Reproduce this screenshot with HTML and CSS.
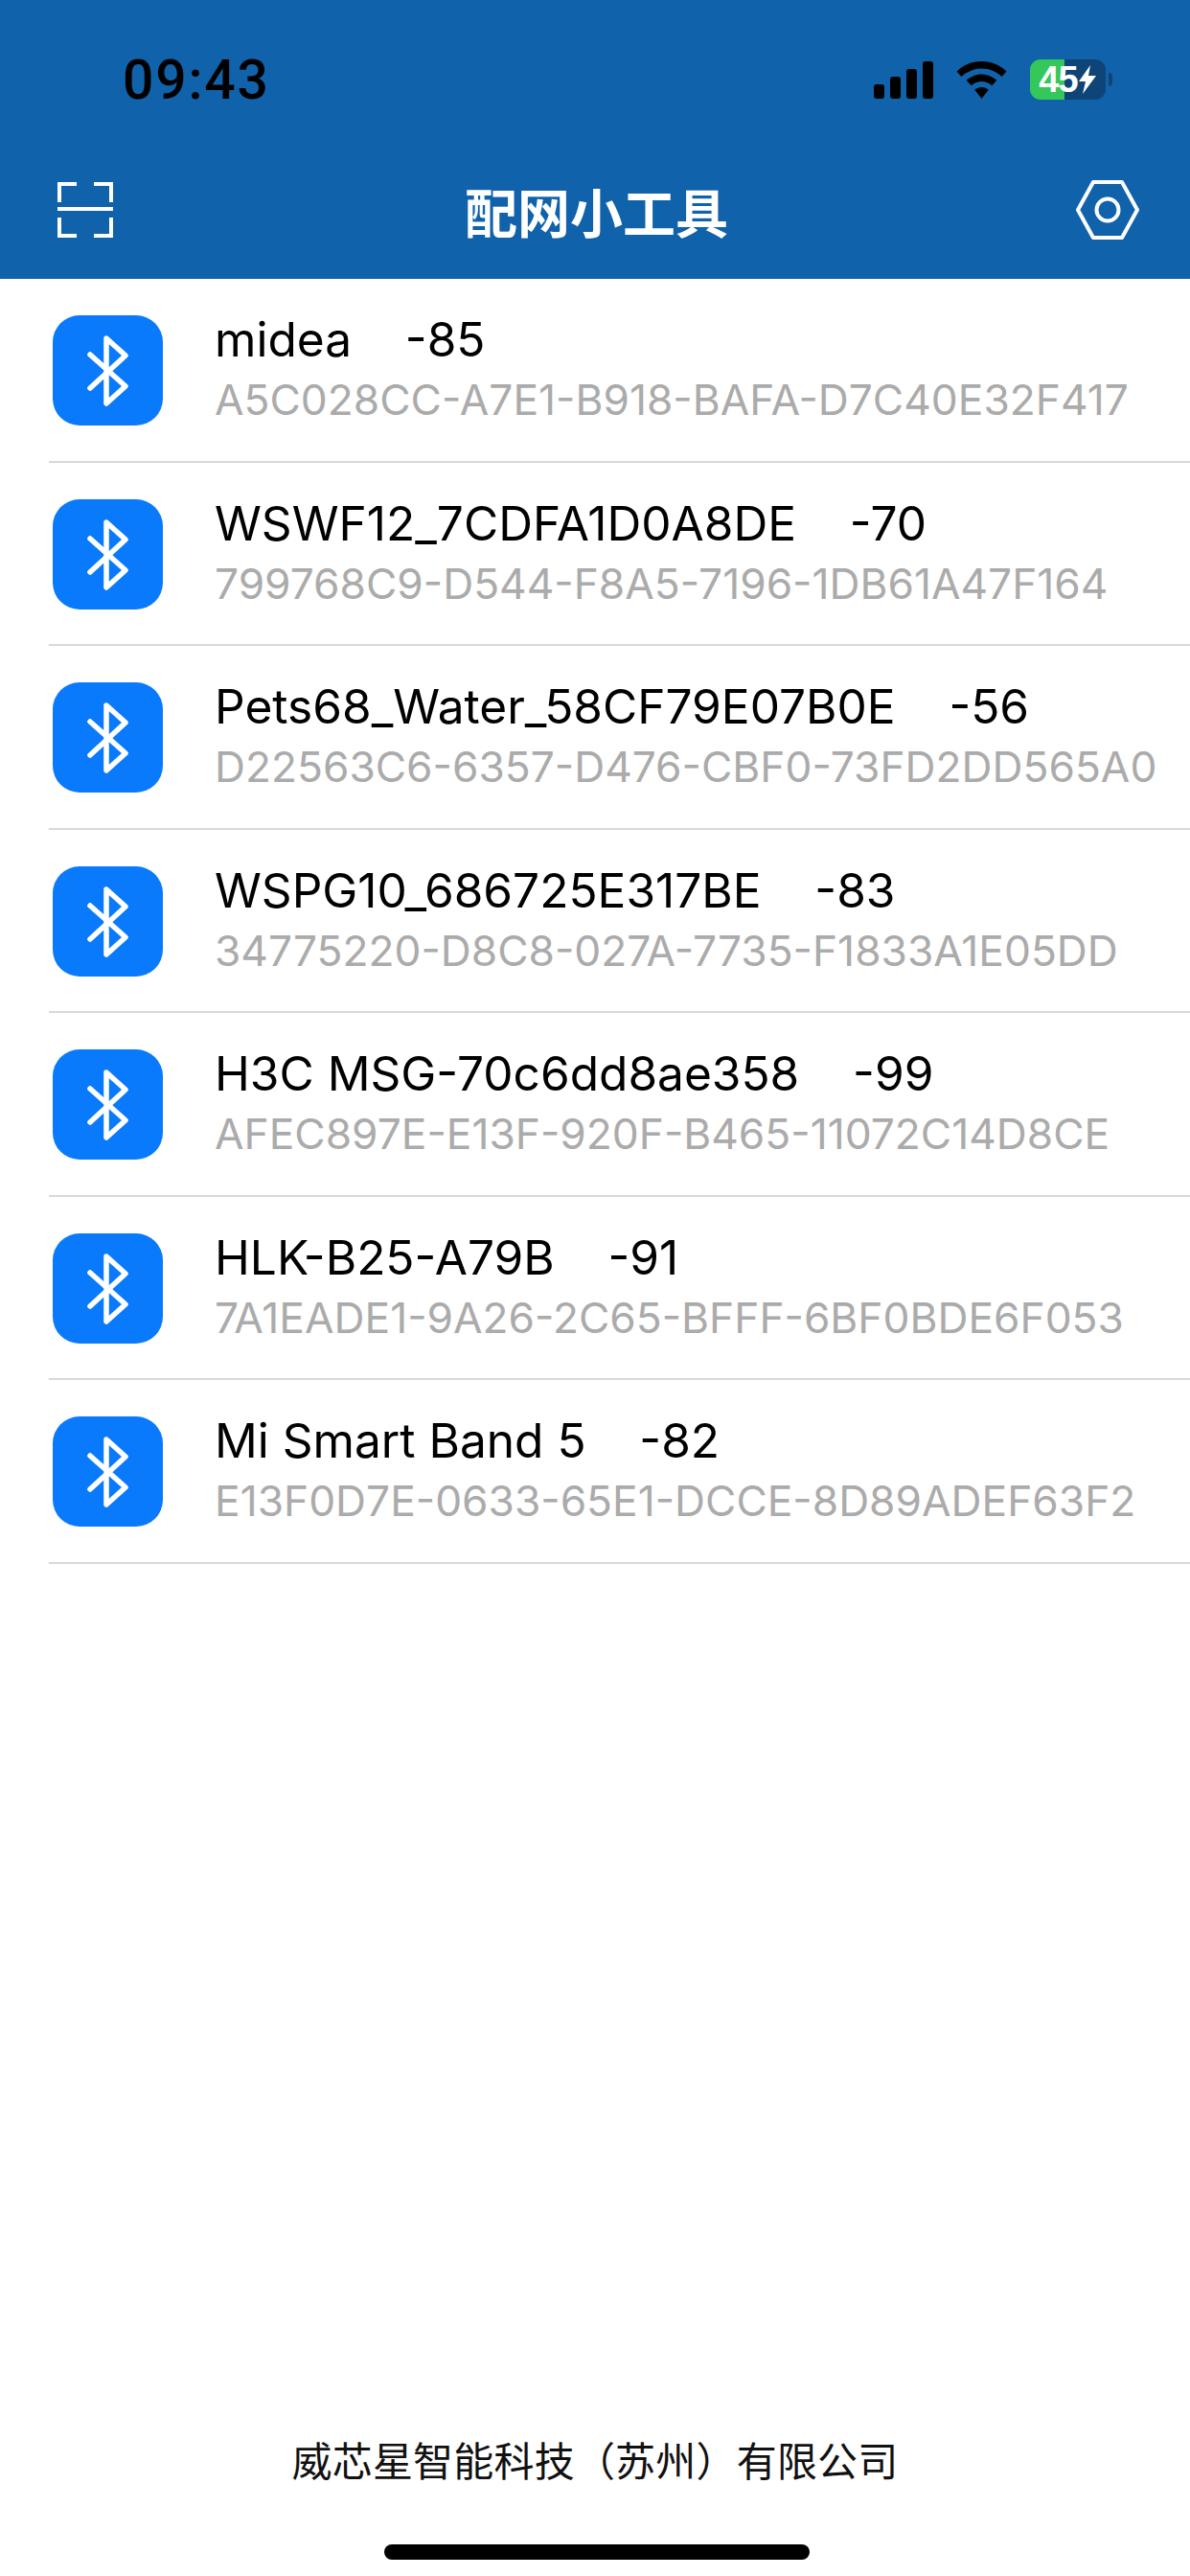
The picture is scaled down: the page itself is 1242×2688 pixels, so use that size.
FILE: index.html
```html
<!DOCTYPE html>
<html lang="zh-CN">
<head>
    <meta charset="UTF-8">
    <meta name="viewport" content="width=device-width, initial-scale=1.0">
    <title>配网小工具</title>
    <link rel="stylesheet" href="styles.css">
</head>
<body>
    <svg class="defs" width="0" height="0">
        <symbol id="bt" viewBox="0 0 115 115">
            <rect width="115" height="115" rx="28" fill="#0a7afc"/>
            <path d="M39 41L76 74L56 92V24L76 42L39 76" fill="none" stroke="#fff" stroke-width="5.5" stroke-linecap="round" stroke-linejoin="round"/>
        </symbol>
    </svg>

    <header class="header">
        <div class="status-bar">
            <span class="time">09:43</span>
            <div class="status-icons">
                <svg class="signal" width="62" height="39" viewBox="0 0 62 39">
                    <rect x="0" y="24" width="11" height="15" rx="3"/>
                    <rect x="17" y="16" width="11" height="23" rx="3"/>
                    <rect x="34" y="8" width="11" height="31" rx="3"/>
                    <rect x="51" y="0" width="11" height="39" rx="3"/>
                </svg>
                <svg class="wifi" width="53" height="39" viewBox="0 0 53 39">
                    <path d="M26.5 0C16.5 0 7.5 3.8 0.5 10.5L5.5 16C11 10.8 18.4 7.6 26.5 7.6S42 10.8 47.5 16L52.5 10.5C45.500 3.800 36.500 0 26.500 0Z"/>
                    <path d="M26.5 13.500C20.500 13.500 15 15.800 10.700 19.800L15.700 25.300C18.600 22.700 22.300 21.100 26.500 21.100S34.400 22.700 37.300 25.300L42.300 19.800C38 15.800 32.500 13.500 26.500 13.500Z"/>
                    <path d="M26.500 27C23.800 27 21.200 28 19.300 29.800L26.500 39L33.700 29.800C31.800 28 29.200 27 26.500 27Z"/>
                </svg>
                <div class="battery-wrap">
                    <div class="battery">
                        <span class="battery-num">45</span>
                        <svg width="20" height="30" viewBox="0 0 20 30"><path d="M13 0L1 17H8L5 30L19 11H11Z" fill="#fff"/></svg>
                    </div>
                    <span class="battery-nub"></span>
                </div>
            </div>
        </div>
        <nav class="nav-bar">
            <svg class="scan" width="58" height="58" viewBox="0 0 58 58" fill="none" stroke="#fff" stroke-width="4">
                <path d="M20 2H2V21M38 2H56V21M2 37V56H20M56 37V56H38"/>
                <path d="M0 28H58"/>
            </svg>
            <h1 class="nav-title">配网小工具</h1>
            <svg class="gear" width="66" height="62" viewBox="0 0 66 62" fill="none" stroke="#fff" stroke-width="4">
                <path d="M18 2H48L64 31L48 60H18L2 31Z" stroke-linejoin="round"/>
                <circle cx="33" cy="31" r="11.500"/>
            </svg>
        </nav>
    </header>

    <main class="device-list">
        <div class="device">
            <svg class="device-icon" width="115" height="115"><use href="#bt"/></svg>
            <div class="device-info">
                <div class="device-name">midea    -85</div>
                <div class="device-uuid">A5C028CC-A7E1-B918-BAFA-D7C40E32F417</div>
            </div>
        </div>
        <div class="device">
            <svg class="device-icon" width="115" height="115"><use href="#bt"/></svg>
            <div class="device-info">
                <div class="device-name">WSWF12_7CDFA1D0A8DE    -70</div>
                <div class="device-uuid">799768C9-D544-F8A5-7196-1DB61A47F164</div>
            </div>
        </div>
        <div class="device">
            <svg class="device-icon" width="115" height="115"><use href="#bt"/></svg>
            <div class="device-info">
                <div class="device-name">Pets68_Water_58CF79E07B0E    -56</div>
                <div class="device-uuid">D22563C6-6357-D476-CBF0-73FD2DD565A0</div>
            </div>
        </div>
        <div class="device">
            <svg class="device-icon" width="115" height="115"><use href="#bt"/></svg>
            <div class="device-info">
                <div class="device-name">WSPG10_686725E317BE    -83</div>
                <div class="device-uuid">34775220-D8C8-027A-7735-F1833A1E05DD</div>
            </div>
        </div>
        <div class="device">
            <svg class="device-icon" width="115" height="115"><use href="#bt"/></svg>
            <div class="device-info">
                <div class="device-name">H3C MSG-70c6dd8ae358    -99</div>
                <div class="device-uuid">AFEC897E-E13F-920F-B465-11072C14D8CE</div>
            </div>
        </div>
        <div class="device">
            <svg class="device-icon" width="115" height="115"><use href="#bt"/></svg>
            <div class="device-info">
                <div class="device-name">HLK-B25-A79B    -91</div>
                <div class="device-uuid">7A1EADE1-9A26-2C65-BFFF-6BF0BDE6F053</div>
            </div>
        </div>
        <div class="device">
            <svg class="device-icon" width="115" height="115"><use href="#bt"/></svg>
            <div class="device-info">
                <div class="device-name">Mi Smart Band 5    -82</div>
                <div class="device-uuid">E13F0D7E-0633-65E1-DCCE-8D89ADEF63F2</div>
            </div>
        </div>
    </main>

    <footer class="footer">
        <div class="company">威芯星智能科技（苏州）有限公司</div>
        <div class="home-bar"></div>
    </footer>
</body>
</html>
```

FILE: styles.css
```css
html, body {
    margin: 0;
    padding: 0;
}
body {
    font-family: Inter, "Liberation Sans", "Noto Sans CJK SC", sans-serif;
    display: flex;
    flex-direction: column;
    width: 1242px;
    height: 2688px;
    overflow: hidden;
    background-color: #fff;
}
.defs {
    position: absolute;
}
.header {
    height: 291px;
    flex-shrink: 0;
    background-color: #1062aa;
    display: flex;
    flex-direction: column;
}
.status-bar {
    display: flex;
    justify-content: space-between;
    align-items: center;
    height: 166px;
    padding: 0 81px 0 128px;
    box-sizing: border-box;
}
.time {
    font-family: Roboto, sans-serif;
    font-size: 57px;
    font-weight: 500;
    letter-spacing: 1.8px;
    color: #000;
}
.status-icons {
    display: flex;
    align-items: center;
    gap: 24px;
}
.battery-wrap {
    display: flex;
    align-items: center;
}
.battery {
    display: flex;
    align-items: center;
    justify-content: center;
    width: 79px;
    height: 42px;
    border-radius: 11px;
    background: linear-gradient(90deg, #34c759 45%, #0e4478 45%);
}
.battery-num {
    font-family: "Liberation Sans", sans-serif;
    font-size: 38px;
    font-weight: 700;
    letter-spacing: -1px;
    color: #fff;
}
.battery-nub {
    width: 4px;
    height: 14px;
    margin-left: 3px;
    border-radius: 0 4px 4px 0;
    background-color: #0e4478;
}
.nav-bar {
    flex: 1;
    display: flex;
    align-items: center;
    justify-content: space-between;
    padding: 0 53px 19px 60px;
}
.nav-title {
    margin: 0 0 0 4px;
    font-family: "Noto Sans CJK SC", sans-serif;
    font-size: 55px;
    font-weight: 700;
    line-height: 1;
    color: #fff;
}
.device-list {
    flex: 1;
}
.device {
    display: flex;
    align-items: center;
    gap: 54px;
    height: 191.500px;
    box-sizing: border-box;
    margin-left: 51px;
    padding: 2px 0 0 4px;
    border-bottom: 2px solid #d8d8d8;
}
.device-icon {
    flex-shrink: 0;
}
.device-name {
    font-size: 49.600px;
    line-height: 60px;
    color: #000;
    white-space: pre;
}
.device-uuid {
    font-size: 44.300px;
    line-height: 66px;
    color: #ababab;
    white-space: pre;
}
.device-info {
    min-width: 0;
    padding-top: 1px;
}
.footer {
    display: flex;
    flex-direction: column;
    align-items: center;
    flex-shrink: 0;
    height: 168px;
}
.company {
    font-family: "Noto Sans CJK SC", sans-serif;
    font-size: 42px;
    letter-spacing: 0.2px;
    line-height: 50px;
    margin-top: 21px;
    color: #111;
}
.home-bar {
    width: 444px;
    height: 16px;
    margin: 64px 0 0 4px;
    border-radius: 8px;
    background-color: #000;
}
```
